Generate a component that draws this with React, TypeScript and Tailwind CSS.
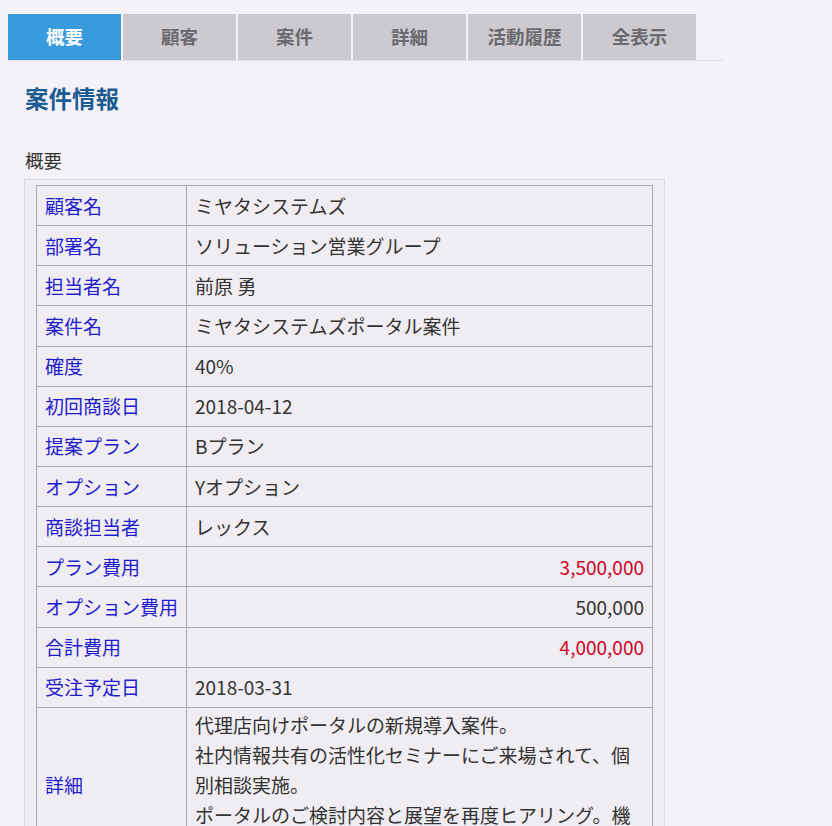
import React from "react";

const tabs = ["概要", "顧客", "案件", "詳細", "活動履歴", "全表示"];

type Row = { label: string; value: React.ReactNode; align?: "right"; red?: boolean };

const rows: Row[] = [
  { label: "顧客名", value: "ミヤタシステムズ" },
  { label: "部署名", value: "ソリューション営業グループ" },
  { label: "担当者名", value: "前原 勇" },
  { label: "案件名", value: "ミヤタシステムズポータル案件" },
  { label: "確度", value: "40%" },
  { label: "初回商談日", value: "2018-04-12" },
  { label: "提案プラン", value: "Bプラン" },
  { label: "オプション", value: "Yオプション" },
  { label: "商談担当者", value: "レックス" },
  { label: "プラン費用", value: "3,500,000", align: "right", red: true },
  { label: "オプション費用", value: "500,000", align: "right" },
  { label: "合計費用", value: "4,000,000", align: "right", red: true },
  { label: "受注予定日", value: "2018-03-31" },
];

const detailLines = [
  "代理店向けポータルの新規導入案件。",
  "社内情報共有の活性化セミナーにご来場されて、個別相談実施。",
  "ポータルのご検討内容と展望を再度ヒアリング。機能面のご要望を確認。",
];

export default function App() {
  return (
    <div
      className="min-h-screen bg-[#f4f2f6] pt-[14px] pl-2 text-[#333333]"
      style={{ fontFamily: '"Noto Sans CJK JP", "Noto Sans", sans-serif' }}
    >
      <div className="flex w-[716px] gap-[2px] border-b border-[#e4e2e7]">
        {tabs.map((t, i) => (
          <div
            key={t}
            className={
              i === 0
                ? "flex h-[46px] w-[113px] items-center justify-center bg-[#3a9bdc] text-[18.5px] font-bold text-white"
                : "flex h-[46px] w-[113px] items-center justify-center bg-[#cccacf] text-[18.5px] font-bold text-[#6b6a6e]"
            }
          >
            {t}
          </div>
        ))}
      </div>

      <div className="pl-[16px]">
        <h1 className="ml-px mt-[22px] text-[23.5px] font-bold leading-[30px] text-[#1c5b92]">案件情報</h1>
        <div className="ml-px mt-[34px] text-[18.5px] leading-[26px] text-[#333333]">概要</div>
        <div className="mt-[6px] w-[641px] border border-[#dcdadf] bg-[#efedf1] px-[11px] pt-[5px]">
          <table className="w-[617px] border-collapse text-[19px]">
            <colgroup>
              <col className="w-[150px]" />
              <col />
            </colgroup>
            <tbody>
              {rows.map((r) => (
                <tr key={r.label} className="h-[40.15px]">
                  <td className="border border-[#a9a9ab] px-[8px] leading-[26px] text-[#1f1ccf]">{r.label}</td>
                  <td
                    className={
                      (r.align === "right" ? "text-right " : "") +
                      (r.red ? "text-[#d0021f] " : "text-[#333333] ") +
                      "border border-[#a9a9ab] px-[8px] leading-[26px]"
                    }
                  >
                    {r.value}
                  </td>
                </tr>
              ))}
              <tr>
                <td className="border border-[#a9a9ab] px-[8px] leading-[26px] text-[#1f1ccf]">詳細</td>
                <td className="border border-[#a9a9ab] px-[8px] py-[2px] leading-[30px] text-[#333333]">
                  {detailLines.map((l) => (
                    <div key={l}>{l}</div>
                  ))}
                </td>
              </tr>
            </tbody>
          </table>
          <div className="h-[12px]" />
        </div>
      </div>
    </div>
  );
}
